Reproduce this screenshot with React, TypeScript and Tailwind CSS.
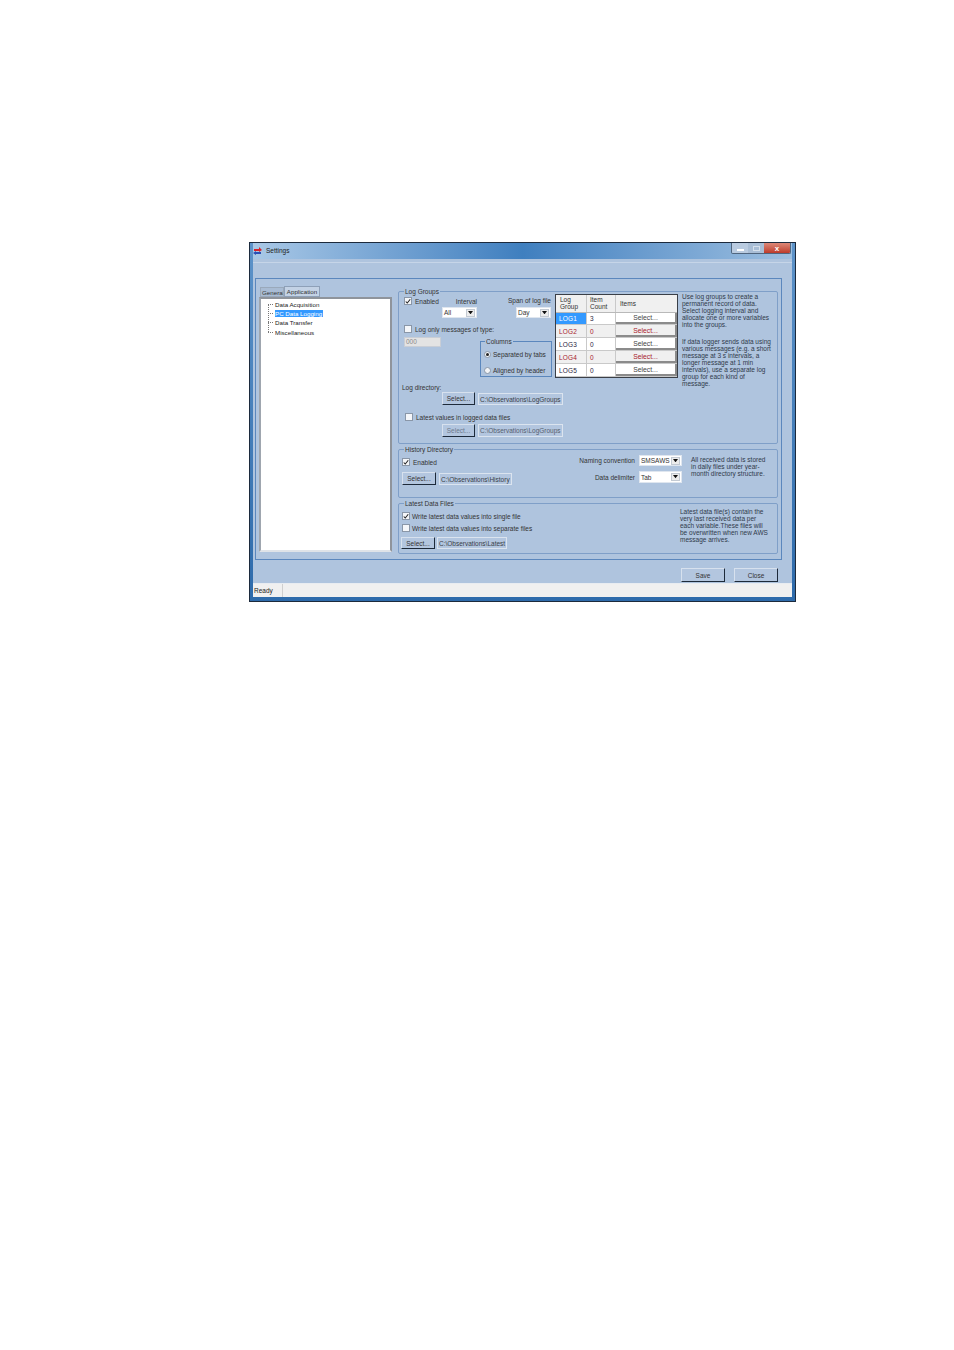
import type { ReactNode } from "react";

const rows = [
  { name: "LOG1", count: "3", alert: false, selected: true },
  { name: "LOG2", count: "0", alert: true, selected: false },
  { name: "LOG3", count: "0", alert: false, selected: false },
  { name: "LOG4", count: "0", alert: true, selected: false },
  { name: "LOG5", count: "0", alert: false, selected: false },
];

const helpA = ["Use log groups to create a", "permanent record of data.", "Select logging interval and", "allocate one or more variables", "into the groups."];
const helpB = ["If data logger sends data using", "various messages (e.g. a short", "message at 3 s intervals, a", "longer message at 1 min", "intervals), use a separate log", "group for each kind of", "message."];
const helpHistory = ["All received data is stored", "in daily files under year-", "month directory structure."];
const helpLatest = ["Latest data file(s) contain the", "very last received data per", "each variable.These files will", "be overwritten when new AWS", "message arrives."];

function Lines({ lines, className = "" }: { lines: string[]; className?: string }) {
  return (
    <div className={`whitespace-nowrap text-[#2f3a4a] ${className}`}>
      {lines.map((l) => (
        <div key={l}>{l}</div>
      ))}
    </div>
  );
}

function Check({ on = false, className = "" }: { on?: boolean; className?: string }) {
  return (
    <span className={`flex h-[8px] w-[8px] shrink-0 items-center justify-center border border-[#8a97a8] bg-[#f4f6f9] ${className}`}>
      {on && (
        <svg viewBox="0 0 8 8" className="h-[7px] w-[7px]">
          <path d="M1 4l2 2 4-5" fill="none" stroke="#222" strokeWidth="1.4" />
        </svg>
      )}
    </span>
  );
}

function Radio({ on = false }: { on?: boolean }) {
  return (
    <span className="flex h-[7px] w-[7px] shrink-0 items-center justify-center rounded-full border border-[#8a97a8] bg-[#f2f4f7]">
      {on && <span className="h-[3px] w-[3px] rounded-full bg-[#222]" />}
    </span>
  );
}

function Combo({ value, className = "" }: { value: string; className?: string }) {
  return (
    <div className={`flex items-center justify-between border border-[#dfe6ef] bg-white pl-[1px] pr-[1px] text-[#333] ${className}`}>
      <span>{value}</span>
      <span className="flex h-[8px] w-[9px] items-center justify-center border border-[#c3cad3] bg-[#ececec]">
        <svg viewBox="0 0 6 4" className="w-[5px]">
          <path d="M0 0h6L3 4z" fill="#111" />
        </svg>
      </span>
    </div>
  );
}

function Btn({ children, className = "", dim = false }: { children: ReactNode; className?: string; dim?: boolean }) {
  return (
    <div
      className={`flex items-center justify-center border border-t-[#d7e1ee] border-l-[#d7e1ee] border-r-[#1d2a3a] border-b-[#1d2a3a] bg-[#b3c6df] ${
        dim ? "text-[#6d7a8c]" : "text-[#333]"
      } ${className}`}
    >
      {children}
    </div>
  );
}

function PathBox({ children, className = "" }: { children: ReactNode; className?: string }) {
  return (
    <div className={`flex items-center whitespace-nowrap border border-[#dbe4ef] bg-[#b3c6df] pl-[1px] text-[#3a3f48] ${className}`}>
      {children}
    </div>
  );
}

function Group({ title, className = "", children }: { title: string; className?: string; children: ReactNode }) {
  return (
    <div className={`relative rounded-[2px] border border-[#7f9fc8] ${className}`}>
      <span className="absolute left-[5px] top-[-4px] bg-[#afc4de] px-[1px] leading-[7px] text-[#333]">{title}</span>
      {children}
    </div>
  );
}

export default function App() {
  return (
    <div className="min-h-[1350px] bg-white pl-[249px] pt-[242px] font-['Liberation_Sans',sans-serif] text-[6.5px] leading-[7px] text-[#333]">
      <div className="flex h-[360px] w-[547px] flex-col border border-[#1c2a3c] bg-gradient-to-b from-[#5d93c9] to-[#2e6bab] px-[3px] pb-[4px]">
        {/* title bar */}
        <div className="flex h-[16px] shrink-0 items-start justify-between bg-gradient-to-r from-[#a9c8e6] via-[#3f7fbf] to-[#9dbfe0]">
          <div className="flex items-center gap-[4px] pt-[3px] text-[#222]">
            <svg viewBox="0 0 9 9" className="h-[9px] w-[9px]">
              <path d="M1 3h5V1l3 3-3 2V5H1z" fill="#d8232a" />
              <path d="M8 6H3V5L0 7l3 2V8h5z" fill="#2a4fb5" />
            </svg>
            <span>Settings</span>
          </div>
          <div className="mr-[1px] flex h-[11px] overflow-hidden rounded-b-[2px] border border-t-0 border-[#50667f]">
            <span className="flex w-[16px] items-end justify-center bg-[#b9cbe0] pb-[2px]">
              <span className="h-[2px] w-[7px] bg-[#fff]" />
            </span>
            <span className="flex w-[16px] items-center justify-center bg-[#a9bed6]">
              <span className="h-[5px] w-[7px] border border-[#d5e0ec]" />
            </span>
            <span className="flex w-[26px] items-center justify-center bg-gradient-to-b from-[#dd8878] to-[#bd3a2a] text-[8px] font-bold text-white">
              x
            </span>
          </div>
        </div>

        {/* client */}
        <div className="flex min-h-0 flex-1 flex-col bg-[#afc4de]">
          <div className="mt-[3px] h-[16px] shrink-0 border-t border-[#c6d5e8]" />
          <div className="ml-[2px] mr-[10px] flex h-[282px] shrink-0 gap-[6px] border border-[#5b87bd] pl-[3px] pr-[3px] pt-[7px]">
            {/* tree column */}
            <div className="flex w-[133px] shrink-0 flex-col">
              <div className="flex h-[11px] items-end pl-[1px]">
                <span className="flex h-[10px] w-[24px] items-center overflow-hidden whitespace-nowrap border border-[#9aa9bb] bg-[#a9bcd4] pl-[1px] text-[6.2px]">General</span>
                <span className="flex h-[11px] w-[36px] items-center justify-center border border-[#8ea0b8] bg-[#c3d2e5] text-[6.2px]">Application</span>
              </div>
              <div className="h-[255px] border-2 border-[#dfe3e8] border-l-[#9fa6af] border-r-[#8f949b] border-t-[#8f949b] bg-white pl-[7px] pt-[1px] text-[6.2px]">
                <ul className="relative text-[#222]">
                  <span className="absolute left-0 top-[4px] h-[28px] border-l border-dotted border-[#777]" />
                  <li className="flex h-[9.2px] items-center gap-[1px]"><span className="w-[5px] border-t border-dotted border-[#777]" /><span className="ml-[1px]">Data Acquisition</span></li>
                  <li className="flex h-[9.2px] items-center gap-[1px]"><span className="w-[5px] border-t border-dotted border-[#777]" /><span className="ml-[1px] bg-[#3399ff] pr-[1px] text-white">PC Data Logging</span></li>
                  <li className="flex h-[9.2px] items-center gap-[1px]"><span className="w-[5px] border-t border-dotted border-[#777]" /><span className="ml-[1px]">Data Transfer</span></li>
                  <li className="flex h-[9.2px] items-center gap-[1px]"><span className="w-[5px] border-t border-dotted border-[#777]" /><span className="ml-[1px]">Miscellaneous</span></li>
                </ul>
              </div>
            </div>

            {/* settings column */}
            <div className="flex min-w-0 flex-1 flex-col gap-[5px] pt-[5px]">
              <Group title="Log Groups" className="h-[153px] shrink-0 pl-[5px] pr-[5px] pt-[4px]">
                <div className="flex h-[88px] items-start">
                  {/* left controls */}
                  <div className="w-[148px] shrink-0">
                    <div className="flex h-[22px] items-start pr-[1px]">
                      <div className="flex w-[38px] items-center gap-[3px] pt-[1px]">
                        <Check on />
                        <span>Enabled</span>
                      </div>
                      <div className="flex flex-col items-end">
                        <span className="mb-[3px] mt-[3px] leading-[5px]">Interval</span>
                        <Combo value="All" className="h-[11px] w-[35px]" />
                      </div>
                      <div className="ml-auto flex w-[44px] flex-col items-end">
                        <span className="mb-[3px] mt-[1px] whitespace-nowrap">Span of log file</span>
                        <Combo value="Day" className="h-[11px] w-[35px]" />
                      </div>
                    </div>
                    <div className="mt-[7px] flex items-center gap-[3px]">
                      <Check />
                      <span>Log only messages of type:</span>
                    </div>
                    <div className="flex items-start justify-between">
                      <div className="mt-[4px] h-[10px] w-[37px] border border-[#c9ced6] bg-[#e3e3e3] pl-[1px] text-[#8a8a8a]">000</div>
                      <div className="relative mt-[8px] h-[36px] w-[72px] border border-[#5b87bd] pl-[3px] pt-[9px]">
                        <span className="absolute left-[4px] top-[-4px] bg-[#afc4de] px-[1px]">Columns</span>
                        <div className="flex items-center gap-[2px]"><Radio on /><span>Separated by tabs</span></div>
                        <div className="mt-[9px] flex items-center gap-[2px]"><Radio /><span>Aligned by header</span></div>
                      </div>
                    </div>
                  </div>

                  {/* log group table */}
                  <div className="ml-[3px] mt-[-2px] w-[123px] shrink-0 border-[1.5px] border-[#3a3f47] bg-white">
                    <div className="flex h-[17.5px] border-b border-[#b9b9b9] bg-[#f0f0f0] text-[#333]">
                      <div className="w-[31px] border-r border-[#c9c9c9] pl-[4px] pt-[1px]">Log<br />Group</div>
                      <div className="w-[29px] border-r border-[#c9c9c9] pl-[3px] pt-[1px]">Item<br />Count</div>
                      <div className="flex-1 pl-[4px] pt-[5px]">Items</div>
                    </div>
                    {rows.map((r) => (
                      <div key={r.name} className={`flex h-[12.9px] border-b border-[#c9c9c9] ${r.alert ? "bg-[#f0f0f0] text-[#a81c2c]" : "bg-white text-[#2a2440]"}`}>
                        <div className={`flex w-[31px] items-center border-r border-[#c9c9c9] pl-[3px] tracking-[0.2px] ${r.selected ? "bg-[#3399ff] text-white" : ""}`}>{r.name}</div>
                        <div className="flex w-[29px] items-center border-r border-[#c9c9c9] pl-[3px]">{r.count}</div>
                        <div className={`flex flex-1 items-center justify-center border-b-2 border-r-2 border-[#8b8b8b] text-[6.8px] ${r.alert ? "bg-[#f0f0f0]" : "bg-white text-[#444]"}`}>Select...</div>
                      </div>
                    ))}
                  </div>

                  {/* help */}
                  <div className="ml-[4px] mt-[-3px] shrink-0">
                    <Lines lines={helpA} />
                    <Lines lines={helpB} className="mt-[10px]" />
                  </div>
                </div>

                <div className="ml-[-2px]">Log directory:</div>
                <div className="ml-[38px] mt-[1px] flex items-end gap-[3px]">
                  <Btn className="h-[13px] w-[33px]">Select...</Btn>
                  <PathBox className="h-[12px] w-[85px]">C:\Observations\LogGroups</PathBox>
                </div>
                <div className="mt-[8px] flex items-center gap-[3px] pl-[1px]">
                  <Check />
                  <span>Latest values in logged data files</span>
                </div>
                <div className="ml-[38px] mt-[3px] flex items-end gap-[3px]">
                  <Btn dim className="h-[13px] w-[33px]">Select...</Btn>
                  <PathBox className="h-[13px] w-[85px] text-[#56606e]">C:\Observations\LogGroups</PathBox>
                </div>
              </Group>

              <Group title="History Directory" className="flex h-[49px] shrink-0 pl-[3px] pr-[7px] pt-[5px]">
                <div className="w-[170px] shrink-0 pt-[1px]">
                  <div className="mt-[2px] flex items-center gap-[3px]">
                    <Check on />
                    <span>Enabled</span>
                  </div>
                  <div className="mt-[6px] flex items-end gap-[3px]">
                    <Btn className="h-[13px] w-[34px]">Select...</Btn>
                    <PathBox className="h-[12px] w-[73px]">C:\Observations\History</PathBox>
                  </div>
                </div>
                <div className="w-[110px] shrink-0">
                  <div className="flex items-center justify-end gap-[4px]">
                    <span>Naming convention</span>
                    <Combo value="SMSAWS" className="h-[11px] w-[43px]" />
                  </div>
                  <div className="mt-[5px] flex items-center justify-end gap-[4px]">
                    <span>Data delimiter</span>
                    <Combo value="Tab" className="h-[12px] w-[43px]" />
                  </div>
                </div>
                <Lines lines={helpHistory} className="ml-[9px] pt-[1px]" />
              </Group>

              <Group title="Latest Data Files" className="flex h-[51px] shrink-0 justify-between pl-[3px] pr-[6px] pt-[8px]">
                <div>
                  <div className="flex items-center gap-[2px]">
                    <Check on />
                    <span>Write latest data values into single file</span>
                  </div>
                  <div className="mt-[4px] flex items-center gap-[2px]">
                    <Check />
                    <span>Write latest data values into separate files</span>
                  </div>
                  <div className="ml-[-1px] mt-[5px] flex items-end gap-[2px]">
                    <Btn className="h-[12px] w-[34px]">Select...</Btn>
                    <PathBox className="h-[12px] w-[70px]">C:\Observations\Latest</PathBox>
                  </div>
                </div>
                <Lines lines={helpLatest} className="mt-[-4px] w-[91px]" />
              </Group>
            </div>
          </div>

          <div className="mr-[14px] flex flex-1 items-start justify-end gap-[9px] pt-[8px]">
            <Btn className="h-[14px] w-[44px]">Save</Btn>
            <Btn className="h-[14px] w-[44px]">Close</Btn>
          </div>

          <div className="flex h-[14px] shrink-0 border-t border-[#e8ecf1] bg-[#f0f0f0]">
            <div className="flex w-[30px] items-center border-r border-[#cfcfcf] pb-[1px] pl-[1px] text-[#222]">Ready</div>
          </div>
        </div>
      </div>
    </div>
  );
}
